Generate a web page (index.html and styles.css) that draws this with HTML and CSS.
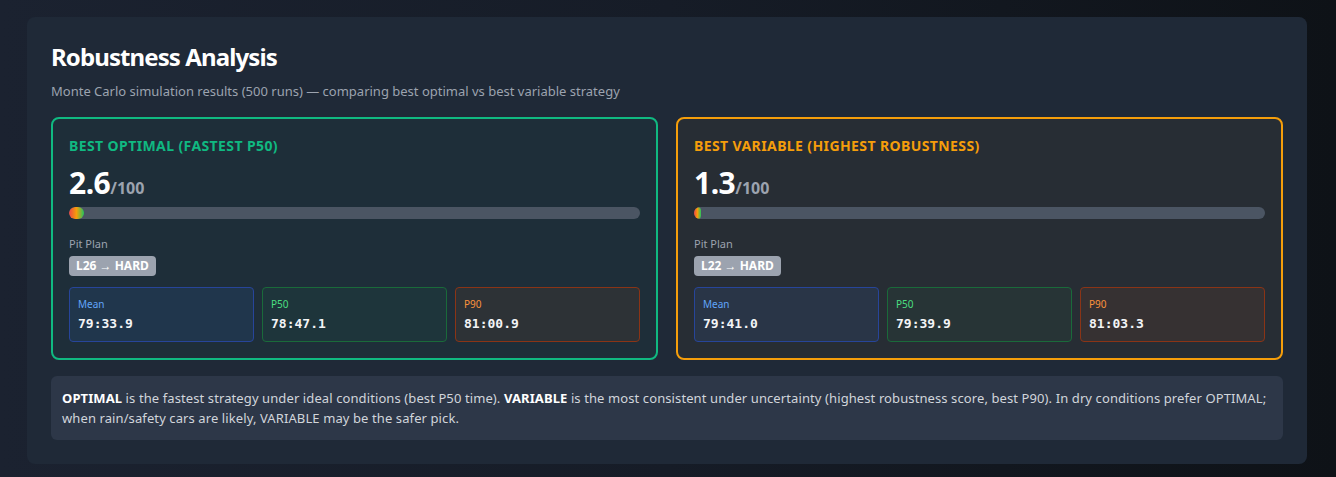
FILE: index.html
```html
<!DOCTYPE html>
<html lang="en">
<head>
<meta charset="utf-8">
<title>Robustness Analysis</title>
<link rel="stylesheet" href="styles.css">
</head>
<body>
<section class="panel">
  <h1 class="title">Robustness Analysis</h1>
  <p class="subtitle">Monte Carlo simulation results (500 runs) — comparing best optimal vs best variable strategy</p>
  <div class="cards">
    <div class="card card-optimal">
      <div class="card-label">Best Optimal (Fastest P50)</div>
      <div class="score"><span class="score-num">2.6</span><span class="score-max">/100</span></div>
      <div class="bar"><div class="bar-fill" style="width:2.6%"></div></div>
      <div class="pit-label">Pit Plan</div>
      <div class="badges"><span class="badge">L26 → HARD</span></div>
      <div class="stats">
        <div class="stat stat-mean"><div class="stat-label">Mean</div><div class="stat-value">79:33.9</div></div>
        <div class="stat stat-p50"><div class="stat-label">P50</div><div class="stat-value">78:47.1</div></div>
        <div class="stat stat-p90"><div class="stat-label">P90</div><div class="stat-value">81:00.9</div></div>
      </div>
    </div>
    <div class="card card-variable">
      <div class="card-label">Best Variable (Highest Robustness)</div>
      <div class="score"><span class="score-num">1.3</span><span class="score-max">/100</span></div>
      <div class="bar"><div class="bar-fill" style="width:1.3%"></div></div>
      <div class="pit-label">Pit Plan</div>
      <div class="badges"><span class="badge">L22 → HARD</span></div>
      <div class="stats">
        <div class="stat stat-mean"><div class="stat-label">Mean</div><div class="stat-value">79:41.0</div></div>
        <div class="stat stat-p50"><div class="stat-label">P50</div><div class="stat-value">79:39.9</div></div>
        <div class="stat stat-p90"><div class="stat-label">P90</div><div class="stat-value">81:03.3</div></div>
      </div>
    </div>
  </div>
  <p class="note"><strong>OPTIMAL</strong> is the fastest strategy under ideal conditions (best P50 time). <strong>VARIABLE</strong> is the most consistent under uncertainty (highest robustness score, best P90). In dry conditions prefer OPTIMAL; when rain/safety cars are likely, VARIABLE may be the safer pick.</p>
</section>
</body>
</html>
```

FILE: styles.css
```css
* { box-sizing: border-box; }
html, body { height: 100%; }
body {
  margin: 0;
  padding: 17px 0 0 27px;
  background: linear-gradient(90deg, #1b2230 0%, #161c27 50%, #0e1217 100%);
  font-family: "Noto Sans", "Open Sans", sans-serif;
  color: #e5e7eb;
}
.panel {
  width: 1280px;
  background: #1f2937;
  border-radius: 8px;
  padding: 24px 24px 24px;
}
.title {
  margin: 0;
  font-size: 24px;
  line-height: 32px;
  font-weight: 700;
  color: #ffffff;
  letter-spacing: -0.9px;
}
.subtitle {
  margin: 8px 0 0;
  font-size: 13px;
  line-height: 20px;
  color: #9ca3af;
}
.cards {
  margin-top: 16px;
  display: grid;
  grid-template-columns: 1fr 1fr;
  gap: 18px;
}
.card {
  border: 2px solid #10b981;
  border-radius: 8px;
  padding: 18px 16px 16px;
  background: rgba(16, 185, 129, 0.04);
}
.card-variable {
  border-color: #f59e0b;
  background: rgba(245, 158, 11, 0.04);
}
.card-label {
  font-size: 14px;
  line-height: 18px;
  font-weight: 700;
  text-transform: uppercase;
  letter-spacing: 0.4px;
  color: #10b981;
}
.card-variable .card-label { color: #f59e0b; }
.score {
  margin-top: 11px;
  line-height: 34px;
}
.score-num {
  font-size: 30px;
  font-weight: 700;
  color: #ffffff;
  letter-spacing: -0.5px;
}
.score-max {
  font-size: 16px;
  font-weight: 700;
  color: #9ca3af;
}
.bar {
  margin-top: 2px;
  height: 12px;
  background: #4b5563;
  border-radius: 6px;
  overflow: hidden;
}
.bar-fill {
  height: 100%;
  border-radius: 6px;
  background: linear-gradient(90deg, #ef4444, #f59e0b, #22c55e);
}
.pit-label {
  margin-top: 17px;
  font-size: 11px;
  line-height: 16px;
  color: #9ca3af;
}
.badges {
  margin-top: 4px;
  display: flex;
  gap: 6px;
}
.badge {
  display: inline-block;
  background: #9ca3af;
  color: #ffffff;
  font-size: 12px;
  font-weight: 700;
  line-height: 20px;
  padding: 0 7px;
  border-radius: 4px;
}
.stats {
  margin-top: 11px;
  display: grid;
  grid-template-columns: repeat(3, 1fr);
  gap: 8px;
}
.stat {
  border: 1px solid #27459a;
  background: rgba(59, 130, 246, 0.1);
  border-radius: 4px;
  padding: 9px 8px 8px;
}
.stat-p50 {
  border-color: #1a6a3a;
  background: rgba(34, 197, 94, 0.05);
}
.stat-p90 {
  border-color: #8a3416;
  background: rgba(249, 115, 22, 0.07);
}
.stat-label {
  font-size: 10px;
  line-height: 14px;
  color: #60a5fa;
}
.stat-p50 .stat-label { color: #4ade80; }
.stat-p90 .stat-label { color: #fb923c; }
.stat-value {
  margin-top: 4px;
  font-family: "DejaVu Sans Mono", "Liberation Mono", monospace;
  font-size: 13px;
  line-height: 18px;
  font-weight: 700;
  color: #f3f4f6;
}
.note {
  margin: 16px 0 0;
  background: #2d3748;
  border-radius: 6px;
  padding: 12px 11px;
  font-size: 13px;
  line-height: 20px;
  letter-spacing: 0.1px;
  color: #d1d5db;
}
.note strong { color: #ffffff; font-weight: 700; }
```
